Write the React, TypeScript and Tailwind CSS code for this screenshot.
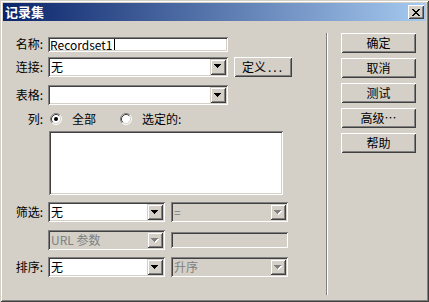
import type { ReactNode } from 'react';

const sunken =
  'shadow-[inset_1px_1px_0_#808080,inset_-1px_-1px_0_#ffffff,inset_2px_2px_0_#404040,inset_-2px_-2px_0_#d4d0c8]';
const raised =
  'shadow-[inset_1px_1px_0_#ffffff,inset_-1px_-1px_0_#404040,inset_2px_2px_0_#d4d0c8,inset_-2px_-2px_0_#808080]';
const arrowRaised =
  'shadow-[inset_1px_1px_0_#d4d0c8,inset_-1px_-1px_0_#404040,inset_2px_2px_0_#ffffff,inset_-2px_-2px_0_#808080]';

function DownArrow({ disabled }: { disabled?: boolean }) {
  const rows = (dx: number, dy: number) => (
    <>
      <rect x={0 + dx} y={0 + dy} width="7" height="1" />
      <rect x={1 + dx} y={1 + dy} width="5" height="1" />
      <rect x={2 + dx} y={2 + dy} width="3" height="1" />
      <rect x={3 + dx} y={3 + dy} width="1" height="1" />
    </>
  );
  return (
    <span className={`w-4 h-4 shrink-0 flex items-center justify-center bg-[#d4d0c8] ${arrowRaised}`}>
      <svg width="8" height="5" viewBox="0 0 8 5" shapeRendering="crispEdges">
        {disabled && <g fill="#ffffff">{rows(1, 1)}</g>}
        <g fill={disabled ? '#808080' : '#000000'}>{rows(0, 0)}</g>
      </svg>
    </span>
  );
}

function Combo({
  value,
  disabled,
  className = '',
}: {
  value?: string;
  disabled?: boolean;
  className?: string;
}) {
  return (
    <div
      className={`h-5 flex items-center p-[2px] ${sunken} ${
        disabled ? 'bg-[#d4d0c8] text-[#808080]' : 'bg-white text-black'
      } ${className}`}
    >
      <span className="flex-1 pl-[1px] text-[12px] leading-4 whitespace-nowrap overflow-hidden">{value}</span>
      <DownArrow disabled={disabled} />
    </div>
  );
}

function Button({ children, className = '' }: { children: ReactNode; className?: string }) {
  return (
    <button
      type="button"
      className={`h-5 flex items-center justify-center bg-[#d4d0c8] text-[12px] leading-4 text-black ${raised} ${className}`}
    >
      {children}
    </button>
  );
}

function Radio({ checked }: { checked?: boolean }) {
  return (
    <svg width="12" height="12" viewBox="0 0 12 12" className="shrink-0">
      <circle cx="6" cy="6" r="5" fill="#ffffff" />
      <path d="M2.11 9.89 A5.5 5.5 0 0 1 9.89 2.11" fill="none" stroke="#808080" strokeWidth="1" />
      <path d="M9.89 2.11 A5.5 5.5 0 0 1 2.11 9.89" fill="none" stroke="#ffffff" strokeWidth="1" />
      <path d="M2.82 9.18 A4.5 4.5 0 0 1 9.18 2.82" fill="none" stroke="#404040" strokeWidth="1" />
      <path d="M9.18 2.82 A4.5 4.5 0 0 1 2.82 9.18" fill="none" stroke="#d4d0c8" strokeWidth="1" />
      {checked && <circle cx="6" cy="6" r="2" fill="#000000" />}
    </svg>
  );
}

function Label({ children }: { children: ReactNode }) {
  return <span className="w-[35px] pr-[5px] shrink-0 text-right text-[12px] leading-4">{children}</span>;
}

export default function App() {
  return (
    <div className="w-[429px] h-[302px] p-[3px] flex flex-col bg-[#d4d0c8] text-black font-['Noto_Sans_CJK_SC',sans-serif] shadow-[inset_1px_1px_0_#d4d0c8,inset_-1px_-1px_0_#404040,inset_2px_2px_0_#ffffff,inset_-2px_-2px_0_#808080] select-none">
      {/* title bar */}
      <div className="h-[18px] shrink-0 flex items-center justify-between px-[2px] bg-linear-to-r/srgb from-[#0a246a] to-[#a6caf0]">
        <span className="text-white font-bold text-[13px] leading-4">记录集</span>
        <button type="button" className={`w-4 h-[14px] flex items-center justify-center bg-[#d4d0c8] ${raised}`}>
          <svg width="8" height="7" viewBox="0 0 8 7" shapeRendering="crispEdges" fill="#000000">
            <rect x="0" y="0" width="2" height="1" />
            <rect x="6" y="0" width="2" height="1" />
            <rect x="1" y="1" width="2" height="1" />
            <rect x="5" y="1" width="2" height="1" />
            <rect x="2" y="2" width="4" height="1" />
            <rect x="3" y="3" width="2" height="1" />
            <rect x="2" y="4" width="4" height="1" />
            <rect x="1" y="5" width="2" height="1" />
            <rect x="5" y="5" width="2" height="1" />
            <rect x="0" y="6" width="2" height="1" />
            <rect x="6" y="6" width="2" height="1" />
          </svg>
        </button>
      </div>

      <div className="flex flex-1">
        {/* form */}
        <div className="w-[323px] shrink-0 pl-[10px] flex flex-col">
          <div className="mt-[15px] flex items-center">
            <Label>名称:</Label>
            <div className={`w-[180px] h-[15px] flex items-center px-[2px] bg-white ${sunken}`}>
              <span className="text-[12px] leading-[11px]">Recordset1</span>
              <span className="w-px h-[11px] bg-black ml-[1px]" />
            </div>
          </div>

          <div className="mt-[4px] flex items-center">
            <Label>连接:</Label>
            <Combo value="无" className="w-[180px]" />
            <Button className="w-[58px] ml-[6px] mt-[1px]">
              定义<span className="tracking-[2px] ml-[2px]">...</span>
            </Button>
          </div>

          <div className="mt-[8px] flex items-center">
            <Label>表格:</Label>
            <Combo className="w-[180px]" />
          </div>

          <div className="mt-[7px] h-[14px] flex items-center text-[12px] leading-4">
            <Label>列:</Label>
            <span className="ml-[2px]">
              <Radio checked />
            </span>
            <span className="ml-[10px]">全部</span>
            <span className="ml-[24px]">
              <Radio />
            </span>
            <span className="ml-[10px]">选定的:</span>
          </div>

          <div className={`mt-[5px] ml-[36px] w-[234px] h-[64px] bg-white ${sunken}`} />

          <div className="mt-[7px] flex items-center">
            <Label>筛选:</Label>
            <Combo value="无" className="w-[117px]" />
            <Combo value="=" disabled className="w-[117px] ml-[6px]" />
          </div>

          <div className="mt-[8px] flex items-center">
            <span className="w-[35px] shrink-0" />
            <Combo value="URL 参数" disabled className="w-[117px]" />
            <div className={`w-[117px] h-4 ml-[6px] bg-[#d4d0c8] ${sunken}`} />
          </div>

          <div className="mt-[7px] flex items-center">
            <Label>排序:</Label>
            <Combo value="无" className="w-[117px]" />
            <Combo value="升序" disabled className="w-[117px] ml-[6px]" />
          </div>
        </div>

        {/* separator */}
        <div className="w-[2px] mt-[12px] h-[262px] flex shrink-0">
          <span className="w-px h-full bg-[#808080]" />
          <span className="w-px h-full bg-white" />
        </div>

        {/* buttons */}
        <div className="pl-[13px] mt-[12px] flex flex-col gap-[5px]">
          <Button className="w-[75px]">确定</Button>
          <Button className="w-[75px]">取消</Button>
          <Button className="w-[75px]">测试</Button>
          <Button className="w-[75px]">高级…</Button>
          <Button className="w-[75px]">帮助</Button>
        </div>
      </div>
    </div>
  );
}
